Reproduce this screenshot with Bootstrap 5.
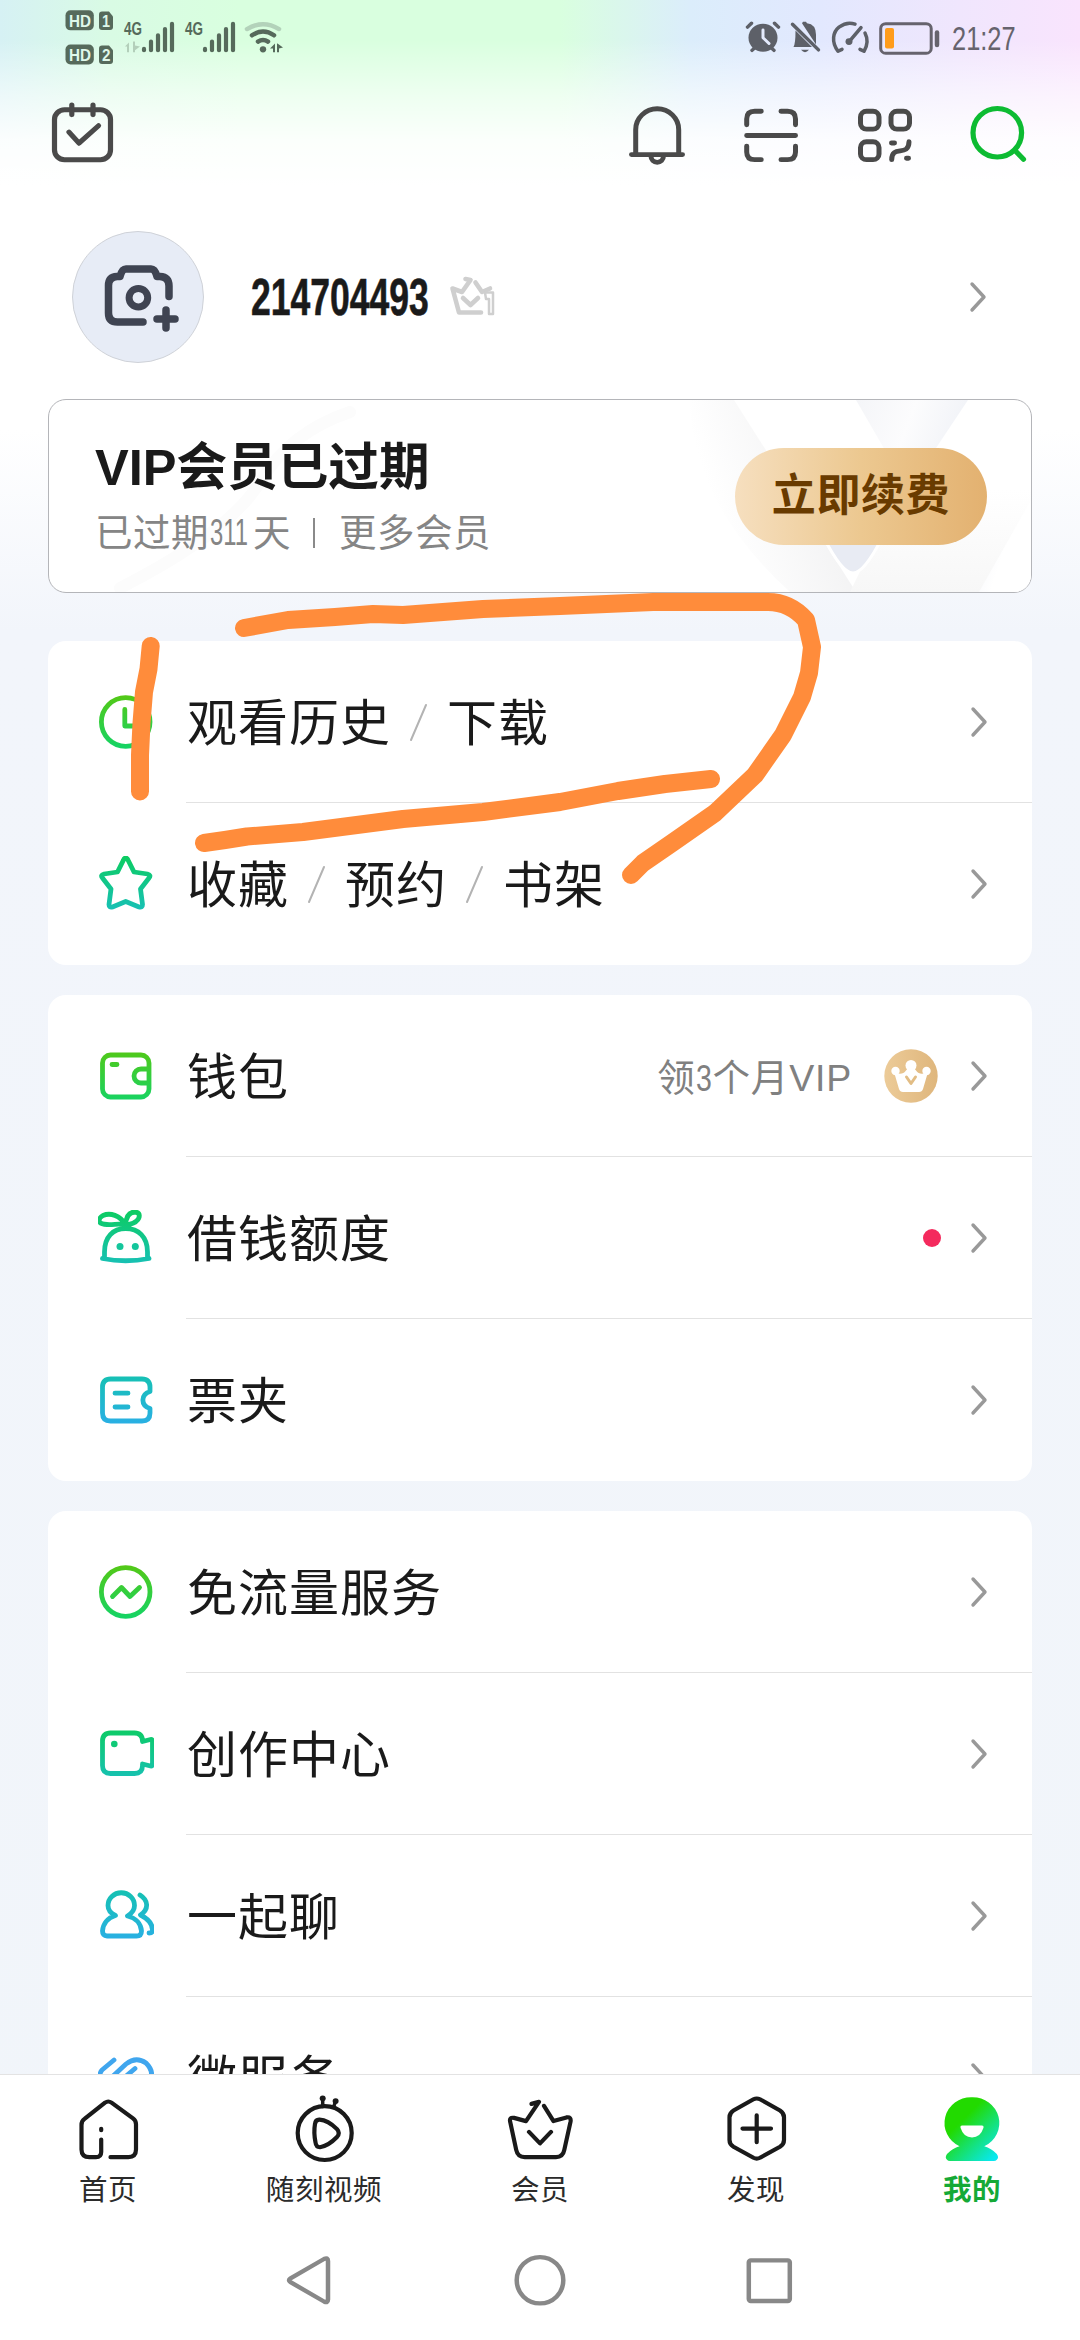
<!DOCTYPE html>
<html lang="zh-CN">
<head>
<meta charset="utf-8">
<meta name="viewport" content="width=device-width, initial-scale=1">
<title>我的</title>
<link href="https://cdn.jsdelivr.net/npm/bootstrap@5.3.0/dist/css/bootstrap.min.css" rel="stylesheet">
<style>
html,body{height:2340px}
body{width:1080px;overflow:hidden;position:relative;color:#1a1a1a;font-family:"Liberation Sans","Noto Sans CJK SC",sans-serif;
background:linear-gradient(180deg,#fff 0,#fff 430px,#f2f5fb 630px,#f1f5fa 100%)}
svg{display:block;flex:none;fill:none;stroke-linecap:round;stroke-linejoin:round}
.narrow{display:block;white-space:nowrap;transform-origin:0 50%;letter-spacing:0}
.topwash{height:192px;background:linear-gradient(180deg,rgba(255,255,255,0) 0,rgba(255,255,255,0) 40px,rgba(255,255,255,.55) 95px,rgba(255,255,255,.9) 140px,#fff 185px),linear-gradient(90deg,#d6f1f4 0,#d9fbe4 110px,#d9ffdf 240px,#d9ffdf 560px,#dbedfb 690px,#e2e8fe 820px,#f0e6fd 960px,#f9e4fd 1080px)}
.statusbar{height:73px}
.clock{width:66px;height:73px;margin-left:12px;margin-right:62px;font-size:33px;line-height:38px;padding-top:20px;color:#66636d}
.clock .narrow{transform:scaleX(.77)}
.toolbar{height:119px;padding:29px 48px 0 51px}
.profile{height:207px;padding:39px 93px 0 72px}
.avatar{width:132px;height:132px;background:#e7ecf6;border:1px solid #cfd2d8}
.uid{width:180px;font-size:51.5px;line-height:60px;font-weight:700;margin-left:47px}
.uid .narrow{transform:scaleX(.69);-webkit-text-stroke:.6px #1a1a1a}
.vipcard{margin:0 48px;height:194px;border:1px solid #b4b5b9;border-radius:18px;background:#fff;padding:0 44px 0 46px}
.vipart{left:0;top:0}
.viptitle{font-size:50.600px;line-height:60px;font-weight:700}
.vipsub{font-size:37.500px;line-height:44px;color:#858585;letter-spacing:.5px;margin-top:13px}
.vipsub .sep{width:2px;height:30px;background:#8a8a8a;margin:0 24px 0 22px}
.d311{width:44px;font-size:36px;line-height:44px}
.d311 .narrow{transform:translateX(1px) scaleX(.66)}
.renew{width:252px;height:97px;border-radius:50px;background:linear-gradient(90deg,#f6dfbf,#ecc890 50%,#e3b170);color:#693b00;font-size:44px;font-weight:700;letter-spacing:.6px}
.lists{height:1481px;padding:48px 48px 0;overflow:hidden}
.panel{border-radius:18px;background:#fff;margin-bottom:30px}
.item{height:162px;padding-left:50px}
.item>svg{width:56px;height:56px;stroke-width:4.8}
.body2{margin-left:32px;height:162px;padding:0 44px 0 1px;border-bottom:1px solid #e2e2e2;font-size:50px;letter-spacing:1px;line-height:60px}
.body2>span{padding-top:4px}
.item:last-child .body2{border-color:transparent}
.slash{width:56px}
.body2>.note{font-size:37.500px;letter-spacing:.8px;color:#808080;margin-right:32px}
.d3{width:17px}
.d3 .narrow{transform:scaleX(.76)}
.reddot{width:18px;height:18px;background:#f42a5d;margin-right:29px}
.tabs{height:142px;border-top:1px solid #e3e3e3;background:#fff}
.tabs a{color:#2b2b2b;text-decoration:none;font-size:28.500px;letter-spacing:.6px;line-height:36px;padding-top:18px}
.tabs a svg{stroke:#1a1a1a;stroke-width:4.2;height:77.400px;margin-bottom:2px}
.tabs a.on{color:#15a936;font-weight:700}
.sysnav{height:124px;background:#fff}
.scribble{left:0;top:580px}
</style>
<script src="https://cdn.jsdelivr.net/npm/bootstrap@5.3.0/dist/js/bootstrap.bundle.min.js"></script>
</head>
<body>
<svg width="0" height="0" class="position-absolute"><defs>
<linearGradient id="g1" x1="0" y1="0" x2="0" y2="56" gradientUnits="userSpaceOnUse"><stop offset="0" stop-color="#55c814"/><stop offset="1" stop-color="#12d468"/></linearGradient>
<linearGradient id="g2" x1="0" y1="0" x2="0" y2="56" gradientUnits="userSpaceOnUse"><stop offset="0" stop-color="#0ccc60"/><stop offset="1" stop-color="#18c0b8"/></linearGradient>
<linearGradient id="g3" x1="0" y1="0" x2="0" y2="56" gradientUnits="userSpaceOnUse"><stop offset="0" stop-color="#14c2b0"/><stop offset="1" stop-color="#2baee8"/></linearGradient>
<linearGradient id="gold" x1="0" x2="1"><stop stop-color="#eccb98"/><stop offset="1" stop-color="#dfb67c"/></linearGradient>
<linearGradient id="me" x1=".25" y1=".3" x2=".85" y2="1"><stop offset=".1" stop-color="#22da00"/><stop offset="1" stop-color="#08e8f0"/></linearGradient>
<linearGradient id="v1" x1="0" y1=".4" x2=".8" y2=".1"><stop offset=".1" stop-color="#fff"/><stop offset="1" stop-color="#f1f1f2"/></linearGradient>
<linearGradient id="v2" x1="0" y1="0" x2="1" y2=".3"><stop stop-color="#f4f5f8"/><stop offset=".5" stop-color="#fcfcfd"/><stop offset="1" stop-color="#f0f2f7"/></linearGradient>
<linearGradient id="v3" x1="0" y1="0" x2="1" y2=".6"><stop stop-color="#f1f3f8"/><stop offset=".6" stop-color="#fff"/></linearGradient>
<linearGradient id="v4" x1="0" y1="0" x2="0" y2="1"><stop stop-color="#fff"/><stop offset="1" stop-color="#f7f7f7"/></linearGradient>
<symbol id="chev" viewBox="0 0 18 32"><path d="M3 3 L15 16 L3 29" stroke="#999" stroke-width="3.4" fill="none"/></symbol>
</defs></svg>

<div class="topwash">
<header class="statusbar d-flex">
<svg width="300" height="72.600" viewBox="0 0 300 75" preserveAspectRatio="none">
<g fill="#566a5b"><rect x="65.500" y="10.700" width="28.300" height="20.600" rx="5"/><path d="M102 12h7l4 5v11q0 3-3 3h-8q-3 0-3-3V15q0-3 3-3z"/><rect x="65.500" y="46" width="28.300" height="20.600" rx="5"/><path d="M102 47h7l4 5v11q0 3-3 3h-8q-3 0-3-3V50q0-3 3-3z"/></g>
<g font-family="Liberation Sans" font-weight="700" fill="#dff8ea"><text x="69" y="27.500" font-size="18" textLength="22" lengthAdjust="spacingAndGlyphs">HD</text><text x="69" y="63" font-size="18" textLength="22" lengthAdjust="spacingAndGlyphs">HD</text><text x="102" y="28" font-size="17" textLength="8" lengthAdjust="spacingAndGlyphs">1</text><text x="102" y="63.500" font-size="17" textLength="8.500" lengthAdjust="spacingAndGlyphs">2</text></g>
<g font-family="Liberation Sans" font-weight="700" fill="#566a5b"><text x="124" y="36.500" font-size="19" textLength="18" lengthAdjust="spacingAndGlyphs">4G</text><text x="185" y="36.500" font-size="19" textLength="18" lengthAdjust="spacingAndGlyphs">4G</text></g>
<g stroke="#566a5b" stroke-width="4.200"><path d="M144 50.500v1.500M151 43v9M158 36.500V52M165 30V52M172 24.500V52"/><path d="M205 50.500v1.500M212 43v9M219 36.500V52M226 30V52M233 24.500V52"/></g>
<path d="M125 48l4-4v10h-2v-6zM133 43v11h2v-2l5-4-5-1v-4z" fill="#b3cfba"/>
<g stroke-width="4.500"><path d="M247 30q16-10 32 0" stroke="#b3d2ba"/><path d="M252 36.500q11-8 22 0M258 43q5-3.500 10 0" stroke="#566a5b"/></g>
<circle cx="263" cy="51" r="3.200" fill="#566a5b"/><path d="M270 50l5-5v9h-2v-4zM277.500 45l5.500 4-4 1v4h-2v-9z" fill="#566a5b"/>
</svg>
<svg class="ms-auto" width="200" height="72.600" viewBox="741 0 200 75" preserveAspectRatio="none">
<g stroke="#5d6068" stroke-width="3.500"><circle cx="764" cy="39" r="14.500" fill="#5d6068" stroke="none"/><path d="M748.500 28l4-4M779.500 28l-4-4M753 52l3-3M775 52l-3-3"/><path d="M764 31v8l6 6" stroke="#e4eafc" stroke-width="3"/>
<path d="M803 24l1-1.500h3l1 1.500q9 1 9 12V46zM794.500 48.500q2-3 2-17L813 48.500z" fill="#5d6068" stroke="none"/><path d="M793.500 25l26 26.500"/><path d="M802 51.500h8q-4 5-8 0z" fill="#5d6068" stroke="none"/>
<path d="M843 51l-4 2c-7-10-5-20 1-25q8-6 16-3M861 51l4 2c4-7 4-13 1-19M851 42l11-13.500"/><circle cx="850" cy="43" r="3.500" fill="#5d6068" stroke="none"/></g>
<rect x="881.700" y="24.500" width="50.500" height="30.500" rx="5" stroke="#66636d" stroke-width="3"/><path d="M938 33.500v13" stroke="#66636d" stroke-width="4.500"/><rect x="886" y="29" width="9" height="21" rx="2" fill="#ff9c1a"/>
</svg>
<div class="clock"><span class="narrow">21:27</span></div>
</header>
<nav class="toolbar d-flex align-items-start">
<svg width="64" height="64" viewBox="51 105 64 66" preserveAspectRatio="none" stroke="#4a4a4a" stroke-width="5.2"><rect x="54.500" y="113" width="56" height="51.500" rx="10"/><path d="M71.800 108v10M93 108v10M69 136l10 11.500L98.500 129.500"/></svg>
<div class="ms-auto d-flex" style="gap:50px">
<svg width="64" height="64" viewBox="626 105 64 66" preserveAspectRatio="none" stroke="#4a4a4a" stroke-width="5"><path d="M635.700 159V133.500a21.500 21.500 0 0 1 43 0V159M631.500 159.200h51M651 161a6.200 6.200 0 0 0 12.400 0"/></svg>
<svg width="64" height="64" viewBox="740 105 64 66" preserveAspectRatio="none" stroke="#4a4a4a" stroke-width="5"><path d="M746.700 128.500v-6q0-8 8-8h6.500M781 114.500h6.500q8 0 8 8v6M746.700 150.500v6q0 8 8 8h6.500M781 164.500h6.500q8 0 8-8v-6M746.700 139.500h48.800"/></svg>
<svg width="64" height="64" viewBox="854 105 64 66" preserveAspectRatio="none" stroke="#4a4a4a" stroke-width="5"><rect x="860.500" y="114.500" width="18.500" height="18.500" rx="6"/><rect x="891" y="114.500" width="18.500" height="18.500" rx="6"/><rect x="860.500" y="146" width="18.500" height="18.500" rx="6"/><path d="M891.500 147.300h3M906.500 163h2M891.700 164.500c0-16 17-2 17.300-18.500"/></svg>
<svg width="64" height="64" viewBox="968 105 64 66" preserveAspectRatio="none" stroke="#0dbb32" stroke-width="5.200"><ellipse cx="997.300" cy="136.700" rx="24.300" ry="25"/><path d="M1015 155L1023.500 164"/></svg>
</div>
</nav>
</div>

<section class="profile d-flex align-items-start">
<div class="avatar rounded-circle"><svg width="130" height="130" viewBox="73 232 130 130" stroke="#3f4452" stroke-width="7.500"><path d="M169 296.500V286q0-9-9-9.500h-3q-2-7.500-6-7.500h-25q-4 0-6 7.500h-3q-8.500.5-8.500 9V313q0 9 9 9H143M166 310v18M157 319h18"/><circle cx="138.400" cy="297.700" r="9.300" stroke-width="7"/></svg></div>
<div class="d-flex flex-fill align-items-center" style="height:132px">
<div class="uid"><span class="narrow">214704493</span></div>
<svg width="52" height="46" viewBox="446 274 52 46" style="margin-left:15px" stroke="#cfcfcf" stroke-width="4.600"><path d="M481 312.500H459l-6.500-24 9.500 3.500 8.500-12-5-1M475.500 282.500l6.500 9.500 8-3.500"/><path d="M463 298l7.500 7 7.500-7"/><path d="M485 292.500h8V314H489v-15h-3z" stroke-width="2.500"/></svg>
<svg class="ms-auto" width="18" height="32"><use href="#chev"/></svg>
</div>
</section>

<section class="vipcard d-flex align-items-center position-relative overflow-hidden">
<svg class="vipart position-absolute" width="982" height="192" viewBox="49 400 982 192" stroke="none"><path d="M690 400h44l122 192H790Q690 500 690 400z" fill="url(#v1)"/><path d="M856 400l52 90 60-90z" fill="url(#v2)"/><path d="M900 490h131v102H850z" fill="url(#v4)"/><path d="M1031 500l-52 92h52z" fill="url(#v3)"/><path d="M824 538q18 35 29 35t29-35z" fill="#e8ebf3" stroke="#fff" stroke-width="3"/><path d="M350 412q-60 20-90 70T120 588" stroke="#fcfcfc" stroke-width="12"/></svg>
<div class="position-relative"><div class="viptitle text-nowrap">VIP会员已过期</div>
<div class="vipsub d-flex align-items-center text-nowrap"><span>已过期</span><span class="d311"><span class="narrow">311</span></span><span>天</span><i class="sep"></i><span>更多会员</span></div></div>
<div class="renew ms-auto d-flex align-items-center justify-content-center position-relative">立即续费</div>
</section>

<main class="lists">
<div class="panel">
<div class="item d-flex align-items-center"><svg viewBox="0 0 56 56" stroke="url(#g1)"><circle cx="27.700" cy="28" r="24.300"/><path d="M26.800 15.500V32H40"/></svg><div class="body2 flex-fill d-flex align-items-center"><span>观看历史</span><svg class="slash" width="56" height="50" viewBox="0 0 56 50"><path d="M20 43L35 8" stroke="#b3b3b3" stroke-width="2"/></svg><span>下载</span><svg class="ms-auto" width="18" height="32"><use href="#chev"/></svg></div></div>
<div class="item d-flex align-items-center"><svg viewBox="0 0 56 56" stroke="url(#g2)"><path d="M27.700 2q1.500 0 2.300 2l6 12 13.500 2q4 1 1.500 4L42.500 33l2 15.500q0 3.500-3.500 2.500L27.700 45.500 14.500 51q-3.500 1-3.500-2.500L13 33 4.500 22q-2.500-3 1.500-4l13.500-2 6-12q.7-2 2.200-2z"/></svg><div class="body2 flex-fill d-flex align-items-center"><span>收藏</span><svg class="slash" width="56" height="50" viewBox="0 0 56 50"><path d="M20 43L35 8" stroke="#b3b3b3" stroke-width="2"/></svg><span>预约</span><svg class="slash" width="56" height="50" viewBox="0 0 56 50"><path d="M20 43L35 8" stroke="#b3b3b3" stroke-width="2"/></svg><span>书架</span><svg class="ms-auto" width="18" height="32"><use href="#chev"/></svg></div></div>
</div>
<div class="panel">
<div class="item d-flex align-items-center"><svg viewBox="0 0 56 56" stroke="url(#g1)"><rect x="4.500" y="7" width="46.500" height="42" rx="8"/><path d="M50 21h-7a7 7 0 0 0 0 14h7M14 16.500h5"/></svg><div class="body2 flex-fill d-flex align-items-center"><span>钱包</span>
<span class="note ms-auto d-flex align-items-center"><span>领</span><span class="d3"><span class="narrow">3</span></span><span>个月VIP</span></span>
<svg width="54" height="54" viewBox="884 1048 54 54" style="margin-right:32px"><circle cx="911" cy="1075" r="26.700" fill="url(#gold)"/><g fill="#fff"><path d="M894 1071q8 4 12-1.500 3-4 5-4t5 4q4 5.500 12 1.500l-5 17q-1 3-4 3h-16q-3 0-4-3z"/><circle cx="911" cy="1064.500" r="5.500"/><circle cx="895.500" cy="1070" r="4.200"/><circle cx="926.500" cy="1070" r="4.200"/></g><path d="M906.500 1076l4.500 6.500 4.500-6.500" stroke="#e2bd85" stroke-width="3"/></svg>
<svg width="18" height="32"><use href="#chev"/></svg></div></div>
<div class="item d-flex align-items-center"><svg viewBox="0 0 56 56" stroke="url(#g2)"><path d="M6.500 47V42C6.500 27 15 18.500 27.700 18.500S49.500 27 49.500 42V47M4.500 48.500q23 4.500 46.500 0M27.700 15C22 5 12 2.500 5 5.500-.5 9-1 14 9 14.500 16 15 22 13 27.700 15zM27.700 15C28 7 31 2 37 2c6 .5 5 6 1.500 9-3 3-6 3-10.800 4z"/><circle cx="22" cy="36.500" r="3.500" fill="#14c69c" stroke="none"/><circle cx="37.300" cy="36.500" r="3.500" fill="#14c69c" stroke="none"/></svg><div class="body2 flex-fill d-flex align-items-center"><span>借钱额度</span><i class="reddot rounded-circle ms-auto"></i><svg width="18" height="32"><use href="#chev"/></svg></div></div>
<div class="item d-flex align-items-center"><svg viewBox="0 0 56 56" stroke="url(#g3)"><path d="M52 19.500V15q0-8-8-8H12.500q-8 0-8 8V41q0 8 8 8H44q8 0 8-8V36.500C42.500 33.500 42.500 22.500 52 19.500zM17 21.200H30M17 35H30"/></svg><div class="body2 flex-fill d-flex align-items-center"><span>票夹</span><svg class="ms-auto" width="18" height="32"><use href="#chev"/></svg></div></div>
</div>
<div class="panel">
<div class="item d-flex align-items-center"><svg viewBox="0 0 56 56" stroke="url(#g1)"><circle cx="27.700" cy="28" r="24.300"/><path d="M14.500 32.500L23.500 23.500 32 32.500 41.500 23.500"/></svg><div class="body2 flex-fill d-flex align-items-center"><span>免流量服务</span><svg class="ms-auto" width="18" height="32"><use href="#chev"/></svg></div></div>
<div class="item d-flex align-items-center"><svg viewBox="0 0 56 56" stroke="url(#g2)"><path d="M44.500 15q0-8-8-8H12.500q-8 0-8 8V39.500q0 8 8 8H36.500q8 0 8-8V38l8 2q2 .5 2-2V15.500q0-2.500-2-2l-8 2z"/><circle cx="16.300" cy="18" r="3.300" fill="#10ca78" stroke="none"/></svg><div class="body2 flex-fill d-flex align-items-center"><span>创作中心</span><svg class="ms-auto" width="18" height="32"><use href="#chev"/></svg></div></div>
<div class="item d-flex align-items-center"><svg viewBox="0 0 56 56" stroke="url(#g3)"><path d="M17.500 27.500C12 25 10 21.500 10 17.500A13 12.500 0 0 1 36.500 17.500C36.500 21.500 34.500 25 29.500 28 38 30 43 36 43.500 43Q43.500 48 38.500 48H9Q4.500 48 4.500 43C5 36 9.500 29.500 17.500 27.500zM42 7c8 5 9.500 14 .5 20 8 4 12 10 12 15q0 3-3.500 3"/></svg><div class="body2 flex-fill d-flex align-items-center"><span>一起聊</span><svg class="ms-auto" width="18" height="32"><use href="#chev"/></svg></div></div>
<div class="item d-flex align-items-center"><svg viewBox="0 0 56 56" stroke="#40a6ee"><path d="M16 10L4 20Q0 25 3 31M14 27L28 14Q38 6 48 13 58 23 50 33M37 18.500L20 33"/></svg><div class="body2 flex-fill d-flex align-items-center"><span>微服务</span><svg class="ms-auto" width="18" height="32"><use href="#chev"/></svg></div></div>
</div>
</main>

<nav class="tabs row g-0 row-cols-5 text-center">
<a class="col d-flex flex-column align-items-center" href="#"><svg width="72" viewBox="72 2094 72 80" preserveAspectRatio="none"><path d="M101.200 2142V2155q0 5.300-5.200 5.300H89.500q-8 0-8-8V2127q0-4 3-6.200L105 2104q3.300-2.400 6.500 0L133 2120.300q3 2.300 3 6V2152.500q0 7.800-7.700 7.800H110.500M101.200 2131v1.500"/></svg><span>首页</span></a>
<a class="col d-flex flex-column align-items-center" href="#"><svg width="72" viewBox="288 2094 72 80" preserveAspectRatio="none"><ellipse cx="324.700" cy="2135.400" rx="27" ry="27.800"/><path d="M322.700 2100v8M335.400 2103l-2 6" stroke-width="3.500"/><circle cx="322.700" cy="2099.500" r="3" fill="#1a1a1a" stroke="none"/><circle cx="335.600" cy="2102.300" r="3" fill="#1a1a1a" stroke="none"/><path d="M319.500 2121.500Q328 2122 337 2131.300 340.500 2135.400 337 2139.500 328 2149 320 2150 316 2150 315.500 2145 313.500 2135 315 2126 315.500 2121.300 319.500 2121.500z"/></svg><span>随刻视频</span></a>
<a class="col d-flex flex-column align-items-center" href="#"><svg width="72" viewBox="504 2092.600 72 77.400"><path d="M531.500 2103.500l7.500-2-13 19.200-12-3.200q-5-.8-3.800 4l6 28q1.500 7.200 8.500 7.200H556q7 0 8.300-7.200l6.200-28q1-5.500-4-4.500l-13 3.700-9.500-15.200M529 2131.500l11 11.500 11-11.500"/></svg><span>会员</span></a>
<a class="col d-flex flex-column align-items-center" href="#"><svg width="72" viewBox="720 2094 72 80" preserveAspectRatio="none"><path d="M753.500 2100.500q3.200-1.700 6.500 0l20 11.500q4 2.500 4 7v23.500q0 4.500-4 7l-20 11.500q-3.300 1.700-6.500 0l-20-11.500q-4-2.500-4-7V2119q0-4.500 4-7zM742.500 2130.800h28.500M756.700 2117v28"/></svg><span>发现</span></a>
<a class="col on d-flex flex-column align-items-center" href="#"><svg width="72" viewBox="936 2094 72 80" preserveAspectRatio="none"><path d="M971.800 2098.300a26.700 26.700 0 0 1 12.500 50.700q7 2 12.500 8 2.500 3.500 0 6-1 1.300-3 1.300H950q-2 0-3-1.300-2.500-2.500 0-6 5.500-6 12.500-8a26.700 26.700 0 0 1 12.300-50.700z" fill="url(#me)" stroke="none"/><path d="M962 2127.500h20q2 0 1.500 2.500-3 10-11.500 10t-11.500-10q-.5-2.500 1.500-2.500z" fill="#fff" stroke="none"/></svg><span>我的</span></a>
</nav>
<footer class="sysnav d-flex justify-content-center align-items-start">
<svg width="540" height="114" viewBox="270 2222 540 118" preserveAspectRatio="none" stroke="#888" stroke-width="4.500"><path d="M324 2266.500q4-2 4 2V2308.500q0 4-4 2L290.500 2290.500q-3-2 0-4z"/><ellipse cx="540" cy="2288.500" rx="23.300" ry="24"/><rect x="748.800" y="2268" width="41" height="42" rx="2"/></svg>
</footer>

<svg class="scribble position-absolute" width="1080" height="320" viewBox="0 580 1080 320" stroke="#ff8c3b" stroke-width="18"><path d="M150.700 646L148.500 669 144 692 141.500 723 140 755V791.500"/><path d="M244 628L288 620 335 617 373 614 403 615 483 609 560 606 653 602H768Q790 602 806 620L812 647 809 673 802 697 783 735 755 775 715 813 672 843 643 863 631 875"/><path d="M204 843L225 840 247 836.500 303 832 403 819 483 812 560 802 618 791 665 784 711 779"/></svg>
</body>
</html>
